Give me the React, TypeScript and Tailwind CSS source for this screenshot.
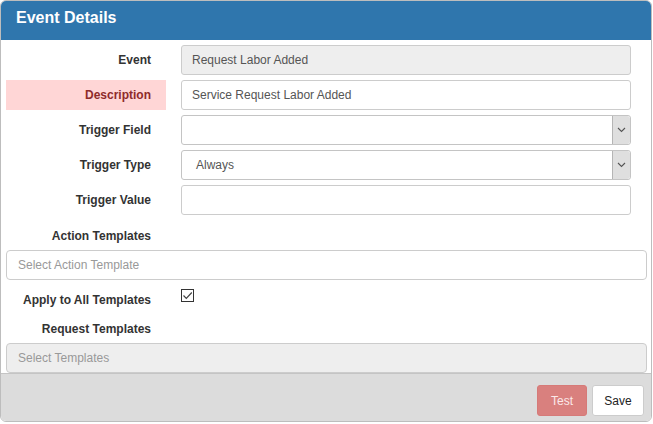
import React from "react"

const font = "font-['Liberation_Sans',Arial,sans-serif]"

const Label = ({ text, error }: { text: string; error?: boolean }) => (
  <div
    className={`flex h-[30px] w-[160px] shrink-0 items-center justify-end pr-[15px] text-[12px] font-bold ${
      error ? "bg-[#ffd6d6] text-[#8e2b2b]" : "text-[#333]"
    }`}
  >
    {text}
  </div>
)

const Caret = () => (
  <div className="flex h-full w-[18px] items-center justify-center rounded-r-[3px] border-l border-[#b5b5b5] bg-[#dfdfdf]">
    <svg width="9" height="6" viewBox="0 0 9 6">
      <path d="M1 1l3.5 3.5L8 1" fill="none" stroke="#555" strokeWidth="1.1" />
    </svg>
  </div>
)

const rows = [
  { label: "Event", value: "Request Labor Added", disabled: true },
  { label: "Description", value: "Service Request Labor Added", error: true },
  { label: "Trigger Field", value: "", select: true },
  { label: "Trigger Type", value: "Always", select: true },
  { label: "Trigger Value", value: "" },
]

export default function App() {
  return (
    <div className={`${font} h-[424px] w-[653px] bg-white`}>
      <div className="flex h-[422px] w-[652px] flex-col overflow-hidden rounded-[6px] border border-[#bdbdbd]">
        <div className="flex h-[39px] shrink-0 items-center bg-[#2f76ad] pb-[5px] pl-[15px] text-[16px] font-bold text-white">
          Event Details
        </div>

        <div className="flex flex-1 flex-col pl-[5px] pr-[4px] pt-[5px]">
          {rows.map((r) => (
            <div key={r.label} className="mb-[5px] flex items-center">
              <Label text={r.label} error={r.error} />
              <div
                className={`ml-[15px] flex h-[30px] w-[450px] items-center rounded-[3px] border text-[12px] text-[#555] ${
                  r.disabled ? "border-[#ccc] bg-[#eee]" : r.select ? "border-[#c4c4c4] bg-white" : "border-[#ccc] bg-white"
                }`}
              >
                <span className={`flex-1 ${r.select ? "pl-[14px]" : "pl-[10px]"}`}>{r.value}</span>
                {r.select && <Caret />}
              </div>
            </div>
          ))}

          <div className="mt-[5px] flex h-[22px] w-[160px] items-center justify-end pr-[15px] text-[12px] font-bold text-[#333]">
            Action Templates
          </div>
          <div className="mt-[3px] flex h-[30px] w-[641px] items-center rounded-[4px] border border-[#ccc] bg-white pl-[11px] text-[12px] text-[#999]">
            Select Action Template
          </div>

          <div className="mt-[9px] flex items-start">
            <div className="flex h-[22px] w-[160px] items-center justify-end pr-[15px] text-[12px] font-bold text-[#333]">
              Apply to All Templates
            </div>
            <div className="ml-[15px] flex h-[13px] w-[13px] items-center justify-center border border-[#333] bg-white">
              <svg width="11" height="9" viewBox="0 0 11 9">
                <path d="M1.5 4.5l2.8 2.8L9.8 1.5" fill="none" stroke="#444" strokeWidth="1.2" />
              </svg>
            </div>
          </div>

          <div className="mt-[9px] flex h-[18px] w-[160px] items-center justify-end pr-[15px] text-[12px] font-bold text-[#333]">
            Request Templates
          </div>
          <div className="mt-[5px] flex h-[30px] w-[641px] items-center rounded-[4px] border border-[#ccc] bg-[#eee] pl-[11px] text-[12px] text-[#999]">
            Select Templates
          </div>
        </div>

        <div className="flex h-[49px] shrink-0 items-start justify-end gap-[5px] border-t border-[#c4c4c4] bg-[#dcdcdc] pr-[7px] pt-[11px]">
          <button className="h-[31px] w-[50px] rounded-[3px] border border-[#d67a78] bg-[#d9807e] text-[12px] text-[#fbe9e9]">
            Test
          </button>
          <button className="h-[31px] w-[52px] rounded-[3px] border border-[#ccc] bg-white text-[12px] text-[#222]">
            Save
          </button>
        </div>
      </div>
    </div>
  )
}
